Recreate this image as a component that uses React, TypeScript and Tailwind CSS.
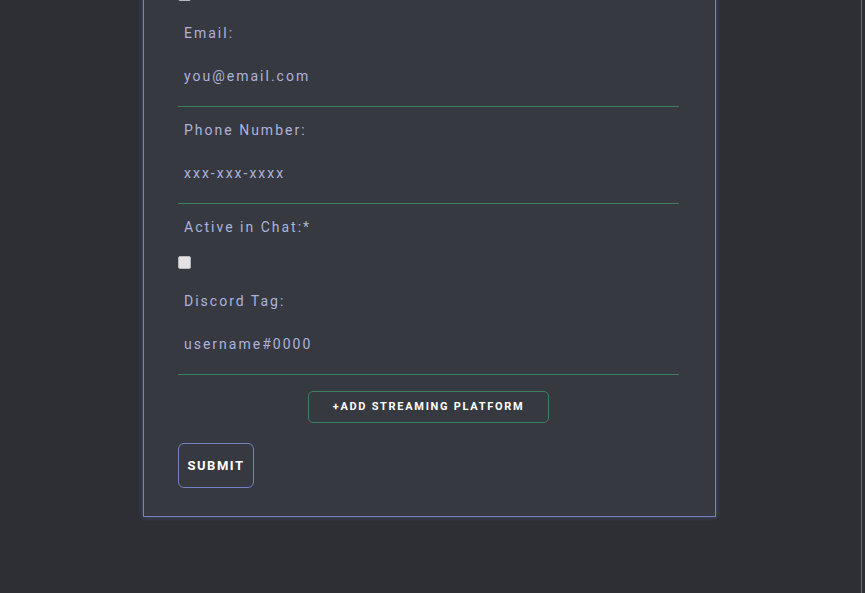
import React from 'react';

const labelCls = "h-[36px] pt-[13px] pl-[6px] text-[14px] leading-[20px] tracking-[2px] text-[#aeb2dc]";
const inputCls = "block w-full h-[61px] bg-transparent border-b border-[#3d8060] pl-[6px] text-[14px] tracking-[2px] text-[#aeb2dc] placeholder:text-[#aeb2dc] outline-none";

const Field: React.FC<{ label: string; placeholder: string }> = ({ label, placeholder }) => (
  <div>
    <div className={labelCls}>{label}</div>
    <input className={inputCls} placeholder={placeholder} />
  </div>
);

const Check: React.FC = () => (
  <div className="pt-[16px] pb-[9px] h-[38px]">
    <input
      type="checkbox"
      className="block appearance-none w-[13px] h-[13px] m-0 rounded-[2px] bg-[#e2e2e4] border border-[#b8b8bc]"
    />
  </div>
);

export default function App() {
  return (
    <div className="flex h-screen overflow-hidden bg-[#2d2f34]" style={{ fontFamily: 'Roboto, "Liberation Sans", sans-serif' }}>
      <div className="flex-1 flex justify-center">
        <div className="w-[573px] -mt-[29px] self-start bg-[#363940] border border-[#7681c6] shadow-[0_0_5px_rgba(118,129,198,0.45)] pl-[34px] pr-[36px] pb-[28px]">
          <Check />
          <Field label="Email:" placeholder="you@email.com" />
          <Field label="Phone Number:" placeholder="xxx-xxx-xxxx" />
          <div className={labelCls}>Active in Chat:*</div>
          <Check />
          <Field label="Discord Tag:" placeholder="username#0000" />
          <div className="flex justify-center pt-[16px]">
            <button className="w-[241px] h-[32px] border border-[#3d8060] rounded-[5px] text-white text-[11px] font-bold tracking-[1.7px]">
              +ADD STREAMING PLATFORM
            </button>
          </div>
          <div className="pt-[20px]">
            <button className="w-[76px] h-[45px] border border-[#7681c6] rounded-[6px] text-white text-[13px] font-bold tracking-[1.5px]">
              SUBMIT
            </button>
          </div>
        </div>
      </div>
      <div className="w-[6px] flex">
        <div className="ml-[2px] w-[1px] bg-[#6a6d74]" />
      </div>
    </div>
  );
}
